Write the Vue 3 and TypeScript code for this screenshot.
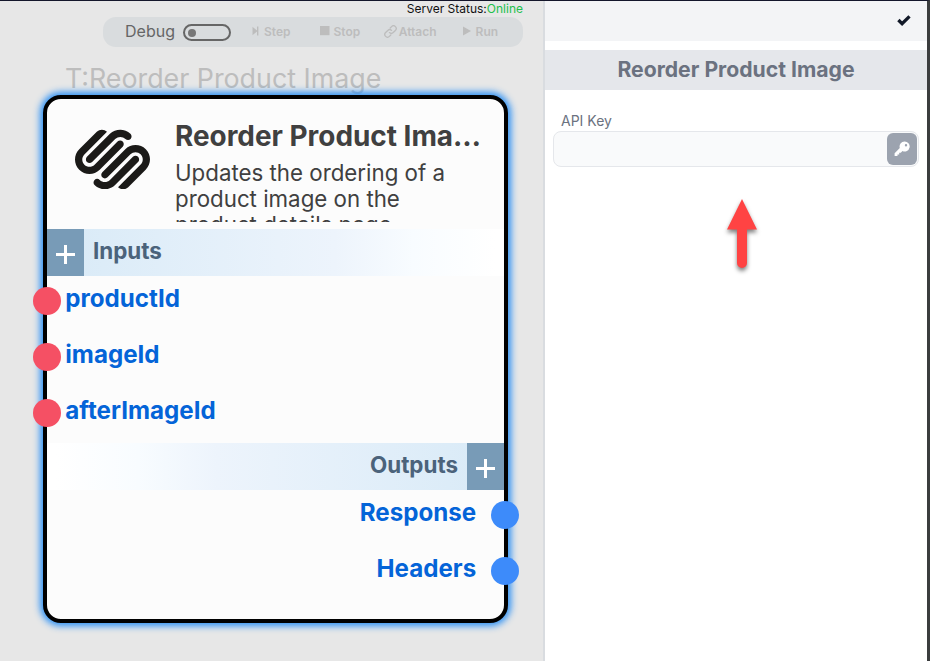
<script setup lang="ts">
interface Port {
  name: string
}

const inputs: Port[] = [{ name: 'productId' }, { name: 'imageId' }, { name: 'afterImageId' }]
const outputs: Port[] = [{ name: 'Response' }, { name: 'Headers' }]
</script>

<template>
  <div class="app">
    <main class="canvas">
      <div class="status">Server Status:<span class="online">Online</span></div>
      <div class="toolbar">
        <span class="debug">Debug</span>
        <span class="toggle"><span class="knob"></span></span>
        <span class="action step">
          <svg width="8" height="10" viewBox="0 0 8 10"><path d="M.5 .8L5 4.6V.5h1.4v9H5V5.4L.5 9.2z" fill="currentColor" /></svg>
          Step
        </span>
        <span class="action stop">
          <svg width="10" height="10" viewBox="0 0 10 10"><path d="M0 0h9.5v9.2H0z" fill="currentColor" /></svg>
          Stop
        </span>
        <span class="action attach">
          <svg width="13" height="13" viewBox="0 0 24 24" fill="none" stroke="currentColor" stroke-width="2.4" stroke-linecap="round"><path d="M10 14a5 5 0 0 0 7 0l4-4a4.9 4.9 0 0 0-7-7l-2.5 2.5" /><path d="M14 10a5 5 0 0 0-7 0l-4 4a4.9 4.9 0 0 0 7 7l2.5-2.5" /></svg>
          Attach
        </span>
        <span class="action run">
          <svg width="8" height="10" viewBox="0 0 8 10"><path d="M0 .5v9L8 5z" fill="currentColor" /></svg>
          Run
        </span>
      </div>
      <div class="node-label">T:Reorder Product Image</div>

      <section class="node">
        <header class="node-head">
          <svg class="logo" viewBox="0 2.25 24 19.2">
            <path fill="#1b1a18" d="M22.655 8.719c-1.802-1.801-4.726-1.801-6.564 0l-7.351 7.35c-.45.45-.45 1.2 0 1.65.45.449 1.2.449 1.65 0l7.351-7.351c.899-.899 2.362-.899 3.264 0 .9.9.9 2.364 0 3.264l-7.239 7.239c.9.899 2.362.899 3.263 0l5.589-5.589c1.836-1.838 1.836-4.763.037-6.563zm-2.475 2.437c-.451-.45-1.201-.45-1.65 0l-7.354 7.389c-.9.899-2.361.899-3.262 0-.45-.45-1.2-.45-1.65 0s-.45 1.2 0 1.649c1.801 1.801 4.726 1.801 6.564 0l7.351-7.35c.449-.487.449-1.239.001-1.688zm-2.439-7.35c-1.801-1.801-4.726-1.801-6.564 0l-7.351 7.351c-.45.449-.45 1.199 0 1.649s1.2.45 1.65 0l7.395-7.351c.9-.899 2.371-.899 3.27 0 .451.45 1.201.45 1.65 0 .421-.487.421-1.199-.05-1.649zm-2.475 2.475c-.45-.45-1.2-.45-1.65 0l-7.351 7.389c-.899.9-2.363.9-3.265 0-.9-.899-.9-2.363 0-3.264l7.239-7.239c-.9-.9-2.362-.9-3.263 0L1.35 8.719c-1.8 1.8-1.8 4.725 0 6.563 1.801 1.801 4.725 1.801 6.564 0l7.35-7.351c.451-.488.451-1.238.002-1.65z" />
          </svg>
          <div class="info">
            <h2>Reorder Product Image</h2>
            <p>Updates the ordering of a product image on the product details page</p>
          </div>
        </header>

        <div class="bar">
          <span class="add"><svg width="19" height="19" viewBox="0 0 19 19"><path d="M9.5 0v19M0 9.5h19" stroke="#fff" stroke-width="3" /></svg></span>
          <span class="bar-title">Inputs</span>
        </div>
        <ul class="ports">
          <li v-for="p in inputs" :key="p.name"><i class="handle"></i><span>{{ p.name }}</span></li>
        </ul>

        <div class="bar out">
          <span class="add"><svg width="19" height="19" viewBox="0 0 19 19"><path d="M9.5 0v19M0 9.5h19" stroke="#fff" stroke-width="3" /></svg></span>
          <span class="bar-title">Outputs</span>
        </div>
        <ul class="ports out">
          <li v-for="p in outputs" :key="p.name"><i class="handle"></i><span>{{ p.name }}</span></li>
        </ul>
      </section>
    </main>

    <aside class="panel">
      <div class="panel-top">
        <svg width="14" height="11" viewBox="0 0 14 11"><path d="M1.4 5l3.7 3.7L12.5 1.4" fill="none" stroke="#111827" stroke-width="3.3" /></svg>
      </div>
      <h3 class="panel-title">Reorder Product Image</h3>
      <div class="form">
        <label>API Key</label>
        <div class="field">
          <span class="key">
            <svg width="16" height="16" viewBox="0 0 16 16"><path fill="#fff" fill-rule="evenodd" d="M10.5 0.5a5 5 0 0 0-4.7 6.5L.6 12.2v2.9h2.9v-1.7h1.7v-1.7h1.6l1.7-1.7A5 5 0 1 0 10.5.5zm1.5 2.6a1.2 1.2 0 1 1 0 2.4 1.2 1.2 0 0 1 0-2.4z" /></svg>
          </span>
        </div>
      </div>
      <svg class="arrow" width="50" height="86" viewBox="0 0 50 86">
        <path d="M25 8L40 38.5H30V72a5 5 0 0 1-10 0V38.5H10z" fill="#ff4343" />
      </svg>
    </aside>
  </div>
</template>

<style>
body {
  margin: 0;
  overflow: hidden;
}
</style>

<style scoped>
* {
  box-sizing: border-box;
}
.app {
  display: flex;
  width: 930px;
  height: 661px;
  border-top: 1px solid #14162b;
  border-right: 3px solid #3b3d3e;
  background: #fff;
  font-family: Inter, sans-serif;
}
.canvas {
  flex: none;
  width: 545px;
  height: 660px;
  border-right: 2px solid #d9dce0;
  background: #e7e7e7;
}
.status {
  height: 16px;
  padding-right: 20px;
  text-align: right;
  font-size: 12px;
  line-height: 16px;
  color: #111;
}
.online {
  color: #22c04b;
}
.toolbar {
  display: flex;
  align-items: center;
  width: 420px;
  height: 30px;
  margin-left: 103px;
  padding: 0 0 2px 22px;
  border-radius: 13px;
  background: #d9dcde;
}
.debug {
  width: 58px;
  font-size: 16px;
  color: #666;
}
.toggle {
  display: flex;
  align-items: center;
  width: 48px;
  height: 17px;
  margin-top: 3px;
  padding-left: 3px;
  border: 2px solid #666;
  border-radius: 9px;
}
.knob {
  width: 8px;
  height: 8px;
  border-radius: 50%;
  background: #777;
}
.action {
  display: flex;
  align-items: center;
  font-size: 12px;
  font-weight: 600;
  color: #bdbdbd;
}
.step {
  gap: 4px;
  margin-left: 21px;
}
.stop {
  gap: 4px;
  margin-left: 29px;
}
.attach {
  gap: 2px;
  margin-left: 23.5px;
}
.run {
  gap: 5px;
  margin-left: 26px;
}
.node-label {
  height: 48px;
  padding-left: 65px;
  font-size: 26.8px;
  line-height: 62px;
  color: #bdbdbd;
}
.node {
  position: relative;
  width: 465px;
  height: 528px;
  margin-left: 43px;
  border: 4px solid #000;
  border-radius: 18px;
  background: #fcfcfc;
  box-shadow: 0 0 7px 3px #2b90f5;
}
.node-head {
  display: flex;
  height: 130px;
  padding: 20px 20px 0 28px;
}
.logo {
  flex: none;
  width: 75px;
  height: 60px;
  margin: 10px 25px 0 0;
}
.info {
  flex: 1;
  min-width: 0;
  height: 103px;
  overflow: hidden;
  color: #404040;
}
h2 {
  margin: 0;
  overflow: hidden;
  font-size: 27.9px;
  font-weight: 700;
  line-height: 35px;
  white-space: nowrap;
  text-overflow: ellipsis;
}
p {
  margin: 6px 0 0;
  font-size: 22.3px;
  line-height: 26px;
}
.bar {
  display: flex;
  width: 457px;
  height: 47px;
  background: linear-gradient(90deg, #d8eaf7, #edf4fc 63%, #f8fcff 80%, #fff 98%);
}
.bar.out {
  flex-direction: row-reverse;
  background: linear-gradient(270deg, #d8eaf7, #edf4fc 63%, #f8fcff 80%, #fff 98%);
}
.add {
  display: flex;
  align-items: center;
  justify-content: center;
  width: 37px;
  padding-top: 3px;
  background: #789bb7;
}
.bar-title {
  padding: 0 9px;
  font-size: 22.4px;
  font-weight: 700;
  line-height: 44px;
  color: #4b637b;
}
.ports {
  height: 167px;
  margin: 0;
  padding: 0;
  list-style: none;
}
.ports li {
  display: flex;
  align-items: flex-start;
  gap: 4px;
  height: 56px;
  margin-left: -13.7px;
  font-size: 24.15px;
  font-weight: 700;
  line-height: 46px;
  color: #0464d8;
}
.handle {
  flex: none;
  width: 28px;
  height: 28px;
  margin-top: 10.7px;
  border-radius: 50%;
  background: #f55064;
}
.ports.out li {
  flex-direction: row-reverse;
  gap: 14.8px;
  margin: 0 -15px 0 0;
}
.ports.out .handle {
  background: #3d8bfa;
}
.panel {
  flex: 1;
  background: #fff;
}
.panel-top {
  display: flex;
  justify-content: flex-end;
  height: 40px;
  padding: 14px 16px 0 0;
  background: #f3f4f6;
}
.panel-title {
  height: 40px;
  margin: 9px 0 0;
  background: #e5e7eb;
  text-align: center;
  font-size: 21.2px;
  font-weight: 700;
  line-height: 39px;
  color: #6b7280;
}
.form {
  padding: 21px 8px 0;
}
label {
  display: block;
  padding-left: 8px;
  font-size: 14px;
  line-height: 20px;
  color: #6b7280;
}
.field {
  display: flex;
  align-items: center;
  justify-content: flex-end;
  width: 366px;
  height: 36px;
  padding-right: 1px;
  border: 1px solid #e5e7eb;
  border-radius: 8px;
  background: #f9fafb;
}
.key {
  display: flex;
  align-items: center;
  justify-content: center;
  width: 30px;
  height: 32px;
  border-radius: 6px;
  background: #9ca3af;
}
.arrow {
  display: block;
  margin: 24px 0 0 172px;
  filter: drop-shadow(0 3px 2px rgba(0, 0, 0, 0.5));
}
</style>
